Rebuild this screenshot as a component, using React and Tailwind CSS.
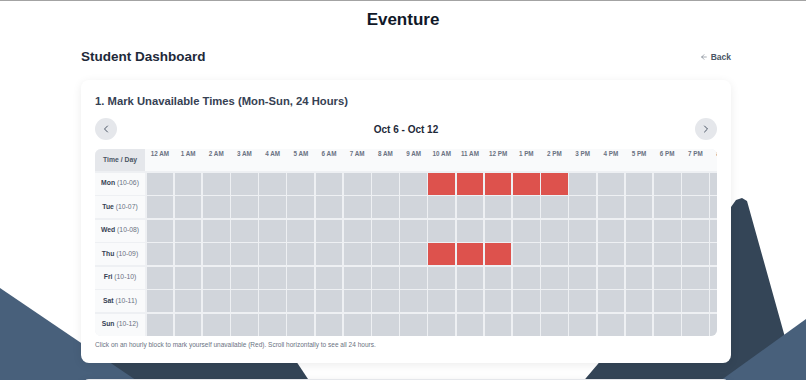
import React from 'react';
import { ArrowLeft, ChevronLeft, ChevronRight } from 'lucide-react';

// ── Data ───────────────────────────────────────────────
const HOURS = [
  '12 AM', '1 AM', '2 AM', '3 AM', '4 AM', '5 AM', '6 AM', '7 AM', '8 AM', '9 AM', '10 AM', '11 AM',
  '12 PM', '1 PM', '2 PM', '3 PM', '4 PM', '5 PM', '6 PM', '7 PM', '8 PM', '9 PM', '10 PM', '11 PM',
];

const DAYS = [
  { day: 'Mon', date: '10-06' },
  { day: 'Tue', date: '10-07' },
  { day: 'Wed', date: '10-08' },
  { day: 'Thu', date: '10-09' },
  { day: 'Fri', date: '10-10' },
  { day: 'Sat', date: '10-11' },
  { day: 'Sun', date: '10-12' },
];

const BLOCKED = { Mon: [10, 11, 12, 13, 14], Thu: [10, 11, 12] };

// ── Background mountains ───────────────────────────────
const Mountains = () => (
  <svg className="absolute inset-0" width="806" height="380" viewBox="0 0 806 380">
    <polygon points="60,390 216,240 316,390" fill="#344557" />
    <polygon points="0,287 152,390 0,390" fill="#48607b" />
    <polygon points="731,206 736,199 742,197 747,200 800,390 575,390" fill="#344557" />
    <polygon points="806,318 806,390 706,390" fill="#48607b" />
  </svg>
);

// ── Availability grid ──────────────────────────────────
const Grid = () => (
  <div className="overflow-hidden rounded-md bg-[#eef0f3]">
    <div className="flex w-max flex-col gap-[1.5px]">
      <div className="flex gap-[1.5px] bg-[#f9fafb]">
        <div className="flex h-[22px] w-[50px] shrink-0 items-center justify-center bg-[#e5e7eb] text-[6.8px] font-bold text-gray-600">
          Time / Day
        </div>
        {HOURS.map(h => (
          <div key={h} className="h-[22px] w-[26.7px] shrink-0 pt-[1px] text-center text-[6.3px] font-bold leading-[8px] text-gray-500">
            {h}
          </div>
        ))}
      </div>
      {DAYS.map(d => (
        <div key={d.day} className="flex gap-[1.5px]">
          <div className="flex h-[22px] w-[50px] shrink-0 items-center justify-center bg-[#f9fafb] text-[6.8px] text-gray-500">
            <span className="font-bold text-gray-700">{d.day}</span>&nbsp;({d.date})
          </div>
          {HOURS.map((h, i) => (
            <div
              key={h}
              className={`h-[22px] w-[26.7px] shrink-0 ${(BLOCKED[d.day] || []).includes(i) ? 'bg-[#dd524d]' : 'bg-[#d1d5db]'}`}
            />
          ))}
        </div>
      ))}
    </div>
  </div>
);

// ── App ────────────────────────────────────────────────
const App = () => (
  <div className="relative h-[380px] overflow-hidden border-t border-[#a3a3a3] bg-white font-['Liberation_Sans',Arial,sans-serif]">
    <Mountains />
    <div className="relative">
      <header className="flex h-[37px] items-center justify-center">
        <h1 className="text-[17px] font-bold text-gray-900">Eventure</h1>
      </header>

      <div className="pl-[81px] pr-[75px]">
        <div className="mt-[9px] flex h-[20px] items-center justify-between">
          <h2 className="text-[13.5px] font-bold text-gray-800">Student Dashboard</h2>
          <button type="button" className="flex items-center gap-[3px] text-[8.5px] font-semibold text-gray-600">
            <ArrowLeft size={8} strokeWidth={1.5} />
            Back
          </button>
        </div>

        <div className="mt-[13px] rounded-lg bg-white px-[14px] pt-[14px] pb-[14px] shadow-[0_2px_10px_rgba(0,0,0,0.08)]">
          <h3 className="text-[11.25px] font-bold leading-[14px] text-gray-700">
            1. Mark Unavailable Times (Mon-Sun, 24 Hours)
          </h3>

          <div className="mt-[10px] flex h-[22px] items-center justify-between">
            <button type="button" className="flex h-[22px] w-[22px] items-center justify-center rounded-full bg-[#e5e7eb] text-gray-600">
              <ChevronLeft size={12} strokeWidth={2} />
            </button>
            <div className="text-[10px] font-bold text-gray-800">Oct 6 - Oct 12</div>
            <button type="button" className="flex h-[22px] w-[22px] items-center justify-center rounded-full bg-[#e5e7eb] text-gray-600">
              <ChevronRight size={12} strokeWidth={2} />
            </button>
          </div>

          <div className="mt-[9px]">
            <Grid />
          </div>

          <p className="mt-[5px] text-[6.5px] leading-[8px] text-gray-500">
            Click on an hourly block to mark yourself unavailable (Red). Scroll horizontally to see all 24 hours.
          </p>
        </div>

        <div className="mt-[16px] h-[40px] rounded-lg border border-gray-200 bg-white shadow-[0_2px_10px_rgba(0,0,0,0.08)]" />
      </div>
    </div>
  </div>
);

export default App;
